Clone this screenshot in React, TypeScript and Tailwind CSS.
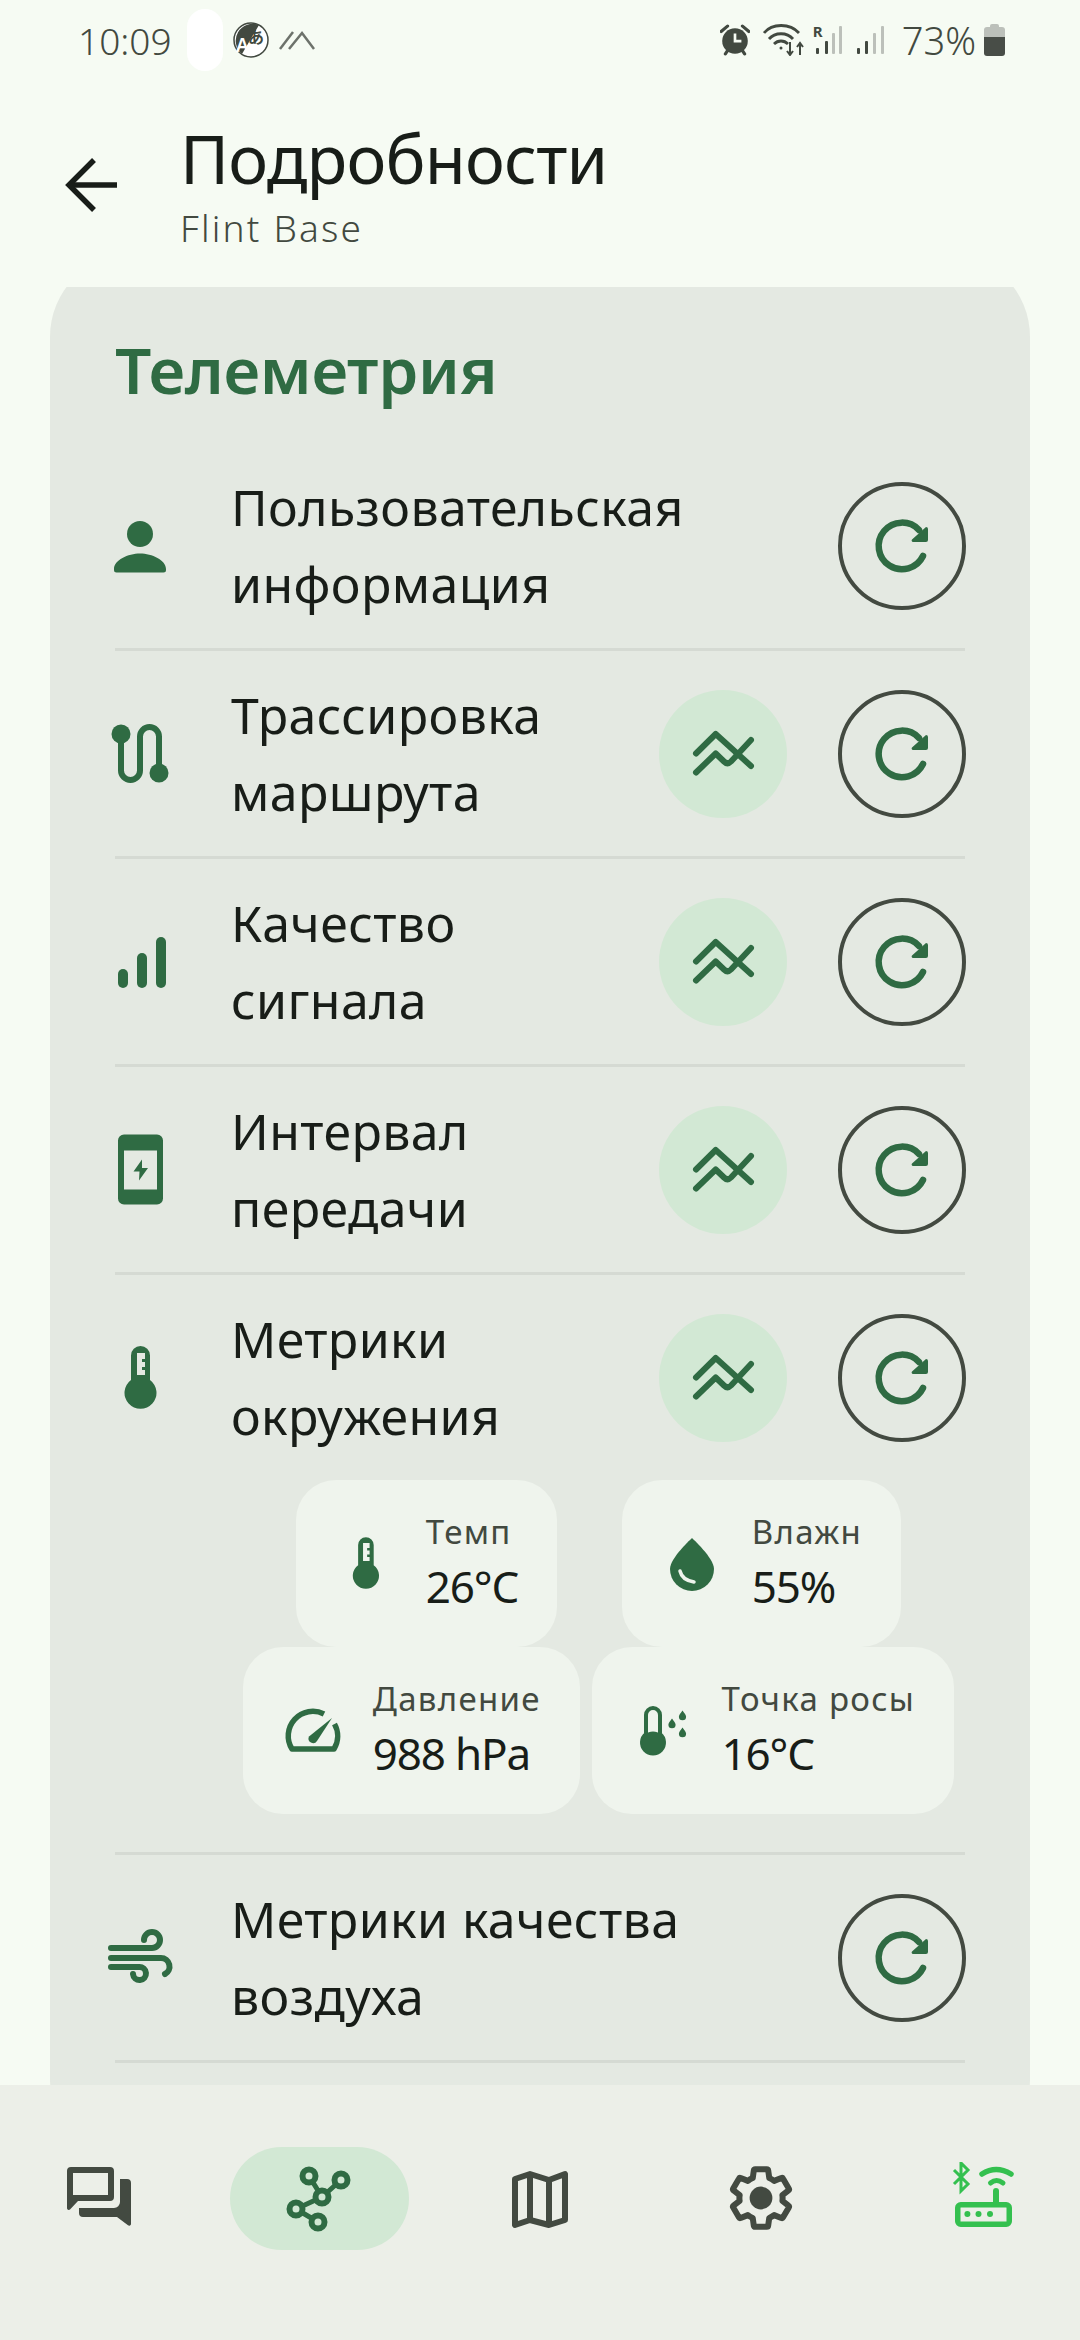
import type { ReactNode } from "react";

const font = { fontFamily: '"Noto Sans", sans-serif' };

function Person() {
  return (
    <svg viewBox="0 0 72 72" className="w-[72px] h-[72px] fill-[#2f6b43]">
      <circle cx="36" cy="24" r="13" />
      <path d="M10 59C10 50 24 43.5 36 43.5S62 50 62 59v1a2.5 2.5 0 0 1-2.5 2.5h-47A2.5 2.5 0 0 1 10 60z" />
    </svg>
  );
}

function Route() {
  return (
    <svg viewBox="0 0 72 72" className="w-[72px] h-[72px]">
      <path d="M17 16V52.5a9.5 9.5 0 0 0 19 0V18.5a9.5 9.5 0 0 1 19 0V55" fill="none" stroke="#2f6b43" strokeWidth="6" />
      <circle cx="17" cy="16" r="9.5" fill="#2f6b43" />
      <circle cx="55" cy="55" r="9.5" fill="#2f6b43" />
    </svg>
  );
}

function Signal() {
  return (
    <svg viewBox="0 0 72 72" className="w-[72px] h-[72px] fill-[#2f6b43]">
      <rect x="14" y="43" width="10" height="19" rx="5" />
      <rect x="33" y="27" width="10" height="35" rx="5" />
      <rect x="52" y="11" width="10" height="51" rx="5" />
    </svg>
  );
}

function Phone() {
  return (
    <svg viewBox="0 0 72 72" className="w-[72px] h-[72px]">
      <path
        fillRule="evenodd"
        fill="#2f6b43"
        d="M20 .5h33a6 6 0 0 1 6 6v58a6 6 0 0 1-6 6H20a6 6 0 0 1-6-6v-58a6 6 0 0 1 6-6zM20 16.5v39h33v-39z"
      />
      <path d="M38 25.5L29.5 37.5H35.5L35 46.5L44 34H38Z" fill="#2f6b43" />
    </svg>
  );
}

function Thermo({ small }: { small?: boolean }) {
  return (
    <svg viewBox="0 0 72 72" className={small ? "w-[59px] h-[59px]" : "w-[72px] h-[72px]"}>
      <path
        fillRule="evenodd"
        fill="#2f6b43"
        d="M27 13.5a9.5 9.5 0 0 1 19 0V38a16 16 0 1 1-19 0zM33 11V33H41V28H38V25H41V20H38V17H41V11z"
      />
    </svg>
  );
}

function Wind() {
  return (
    <svg viewBox="0 0 72 72" className="w-[72px] h-[72px]" fill="none" stroke="#2f6b43" strokeWidth="6" strokeLinecap="round">
      <path d="M7 26H48A8 8 0 1 0 40 18" />
      <path d="M7 36H57A8.5 8.5 0 0 1 61 52" />
      <path d="M7 45H35A6.5 6.5 0 1 1 29 52" />
    </svg>
  );
}

function Drop() {
  return (
    <svg viewBox="0 0 72 72" className="w-[72px] h-[72px]">
      <path d="M36 10C36 10 14 30 14 41A22 22 0 0 0 58 41C58 30 36 10 36 10Z" fill="#2f6b43" />
      <path d="M24 43Q26 52 38 54" fill="none" stroke="#eff4ed" strokeWidth="3.5" strokeLinecap="round" />
    </svg>
  );
}

function Gauge() {
  return (
    <svg viewBox="0 0 72 72" className="w-[72px] h-[72px]">
      <path
        d="M47 19A24.6 24.6 0 0 0 15 54H57A24.6 24.6 0 0 0 57.5 29"
        fill="none"
        stroke="#2f6b43"
        strokeWidth="5.5"
        strokeLinejoin="round"
      />
      <path d="M55 23L40 46a4.6 4.6 0 0 1-8-4.5Z" fill="#2f6b43" />
    </svg>
  );
}

function DewThermo() {
  return (
    <svg viewBox="0 0 72 72" className="w-[72px] h-[72px]">
      <path d="M20 39V20a7 7 0 0 1 14 0V39a11 11 0 1 1-14 0Z" fill="none" stroke="#2f6b43" strokeWidth="4" />
      <circle cx="27" cy="47.5" r="11" fill="#2f6b43" />
      <path d="M46 23.5c-2 3-3.6 4.5-3.6 6.2a3.6 3.6 0 0 0 7.2 0c0-1.7-1.6-3.2-3.6-6.2Z" fill="#2f6b43" />
      <path d="M56.5 15.5c-2 3-3.6 4.5-3.6 6.2a3.6 3.6 0 0 0 7.2 0c0-1.7-1.6-3.2-3.6-6.2Z" fill="#2f6b43" />
      <path d="M56.5 32.5c-2 3-3.6 4.5-3.6 6.2a3.6 3.6 0 0 0 7.2 0c0-1.7-1.6-3.2-3.6-6.2Z" fill="#2f6b43" />
    </svg>
  );
}

function TraceButton() {
  return (
    <div className="w-[128px] h-[128px] rounded-full bg-[#d2e8d4] flex items-center justify-center shrink-0">
      <svg viewBox="0 0 72 72" className="w-[72px] h-[72px]" fill="none" stroke="#2f6b43" strokeWidth="6" strokeLinecap="round" strokeLinejoin="round">
        <path d="M9 35.5L28.7 16L64 48" />
        <path d="M9 54.5L28.7 35.5L37 43.5Q40.5 47 44 43.5L64 22" />
      </svg>
    </div>
  );
}

function RefreshButton() {
  return (
    <div className="w-[128px] h-[128px] rounded-full border-4 border-[#434a41] flex items-center justify-center shrink-0">
      <svg viewBox="0 0 72 72" className="w-[72px] h-[72px]">
        <path d="M57 46A23.3 23.3 0 1 1 53 20" fill="none" stroke="#2f6b43" strokeWidth="6.5" strokeLinecap="round" />
        <path d="M60 17a2 2 0 0 1 2 2V30a2 2 0 0 1-2 2H47a1.5 1.5 0 0 1-1-2.5Z" fill="#2f6b43" />
      </svg>
    </div>
  );
}

function Row({ icon, text, trace }: { icon: ReactNode; text: string; trace?: boolean }) {
  return (
    <div className="h-[205px] flex items-center">
      <div className="w-[50px] mr-[66px] flex justify-center">
        <div className="w-[72px] h-[72px] shrink-0">{icon}</div>
      </div>
      <div className="flex-1 whitespace-pre-line text-[50px] leading-[77px] tracking-[0.4px] text-[#181d18]">{text}</div>
      {trace && (
        <div className="mr-[51px]">
          <TraceButton />
        </div>
      )}
      <RefreshButton />
    </div>
  );
}

function Divider() {
  return <div className="h-[3px] bg-[#d5dad3] mr-px" />;
}

function Metric({ icon, label, value }: { icon: ReactNode; label: string; value: string }) {
  return (
    <div className="h-[167px] rounded-[40px] bg-[#eff4ed] flex items-center pl-[34px] pr-[39px] gap-[24px]">
      <div className="w-[72px] h-[72px] flex items-center justify-center">{icon}</div>
      <div className="pb-[6px]">
        <div className="text-[33px] leading-[50px] tracking-[1.3px] text-[#424940]">{label}</div>
        <div className="text-[44px] leading-[58px] tracking-[-1.2px] text-[#181d18]">{value}</div>
      </div>
    </div>
  );
}

function StatusLeft() {
  return (
    <div className="flex items-center">
      <span className="ml-[78px] text-[37px] leading-none text-[#424940] font-light">10:09</span>
      <div className="ml-[15px] w-[36px] h-[62px] rounded-full bg-white" />
      <svg viewBox="0 0 36 36" className="ml-[10px] w-[36px] h-[36px]">
        <circle cx="18" cy="18" r="17" fill="#fff" stroke="#424940" strokeWidth="1.5" />
        <path d="M26 3A17 17 0 0 0 9 32Z" fill="#424940" />
        <text x="3" y="30" fontSize="19" fontWeight="600" fill="#fff" fontFamily="Noto Sans, sans-serif">A</text>
        <text x="15" y="21" fontSize="16" fontWeight="700" fill="#424940" fontFamily="Noto Sans CJK JP, sans-serif">あ</text>
      </svg>
      <svg viewBox="0 0 36 20" className="ml-[10px] w-[36px] h-[20px]" fill="none" stroke="#6d726b" strokeWidth="2.5">
        <path d="M1 19L14 2" />
        <path d="M10 19L23 3L35 19" />
      </svg>
    </div>
  );
}

function StatusRight() {
  return (
    <div className="flex items-center mr-[75px]">
      <svg viewBox="0 0 28 30" className="w-[30px] h-[32px]">
        <circle cx="14" cy="16" r="12" fill="#424940" />
        <path d="M14 9V16H20" fill="none" stroke="#f6fbf3" strokeWidth="2.5" />
        <path d="M1 7L7 2M27 7L21 2M5 28L7 25M23 28L21 25" stroke="#424940" strokeWidth="3" strokeLinecap="round" />
      </svg>
      <svg viewBox="0 0 42 32" className="ml-[13px] w-[42px] h-[32px]" fill="none" stroke="#424940" strokeWidth="2.8">
        <path d="M1 9C9 -1 27 -1 36 9" />
        <path d="M6 15C12 8 24 8 30 15" />
        <path d="M11 20C15 16 21 16 25 20" />
        <circle cx="18" cy="24" r="1.5" fill="#424940" stroke="none" />
        <path d="M27 18V31M24 27L27 31L30 27" strokeWidth="2" />
        <path d="M37 31V19M34 23L37 19L40 23" strokeWidth="2" />
      </svg>
      <div className="relative ml-[8px] w-[30px] h-[30px]">
        <span className="absolute left-0 -top-[2px] text-[15px] leading-[17px] font-bold text-[#424940]">R</span>
        <svg viewBox="0 0 30 30" className="w-[30px] h-[30px]">
          <rect x="3" y="23" width="3" height="6" rx="1" fill="#424940" />
          <rect x="12" y="16" width="3" height="13" rx="1" fill="#424940" />
          <rect x="19" y="8" width="3" height="21" rx="1" fill="#bcc0ba" />
          <rect x="26" y="1" width="3" height="28" rx="1" fill="#bcc0ba" />
        </svg>
      </div>
      <svg viewBox="0 0 28 30" className="ml-[13px] w-[28px] h-[30px]">
        <rect x="1" y="23" width="3" height="6" rx="1" fill="#424940" />
        <rect x="9" y="16" width="3" height="13" rx="1" fill="#424940" />
        <rect x="17" y="8" width="3" height="21" rx="1" fill="#bcc0ba" />
        <rect x="25" y="1" width="3" height="28" rx="1" fill="#bcc0ba" />
      </svg>
      <span className="ml-[18px] text-[38px] leading-none text-[#424940] font-light">73%</span>
      <div className="ml-[8px] w-[21px] h-[32px] flex flex-col items-center">
        <div className="w-[9px] h-[3px] rounded-t-[2px] bg-[#bcc0ba]" />
        <div className="w-[21px] h-[10px] rounded-t-[3px] bg-[#bcc0ba]" />
        <div className="w-[21px] h-[19px] rounded-b-[3px] bg-[#484d47]" />
      </div>
    </div>
  );
}

function Chat() {
  return (
    <svg viewBox="0 0 72 72" className="w-[72px] h-[72px]" fill="#434a41">
      <path
        fillRule="evenodd"
        d="M9 5H48a4 4 0 0 1 4 4V35a4 4 0 0 1-4 4H16L8 47.5a1.8 1.8 0 0 1-3-1.3V9a4 4 0 0 1 4-4zM11 11V33H46V11Z"
      />
      <path d="M58 17H65a4 4 0 0 1 4 4V62a1.8 1.8 0 0 1-3 1.3L55 55H21a4 4 0 0 1-4-4V46H52a6 6 0 0 0 6-6Z" />
    </svg>
  );
}

function Hub() {
  return (
    <svg viewBox="0 0 72 72" className="w-[72px] h-[72px]" fill="#d2e8d4" stroke="#2f6b43" strokeWidth="6">
      <path d="M26 13L39 34L58 17M39 34L13 46L35 59" fill="none" strokeWidth="5" />
      <circle cx="26" cy="13" r="6.5" />
      <circle cx="58" cy="17" r="6.5" />
      <circle cx="39" cy="34" r="6.5" />
      <circle cx="13" cy="46" r="6.5" />
      <circle cx="35" cy="59" r="6.5" />
    </svg>
  );
}

function MapIcon() {
  return (
    <svg viewBox="0 0 72 72" className="w-[72px] h-[72px]" fill="none" stroke="#434a41" strokeWidth="6" strokeLinejoin="round">
      <path d="M11 17L26 12L45 18L61 12V58L45 63L26 58L11 63Z" />
      <path d="M26 12V58M45 18V63" />
    </svg>
  );
}

function Gear() {
  return (
    <svg viewBox="0 0 24 24" className="w-[72px] h-[72px]">
      <path
        fill="none"
        stroke="#434a41"
        strokeWidth="2"
        strokeLinejoin="round"
        d="M19.14,12.94c0.04-0.3,0.06-0.61,0.06-0.94c0-0.32-0.02-0.64-0.07-0.94l2.03-1.58c0.18-0.14,0.23-0.41,0.12-0.61 l-1.92-3.32c-0.12-0.22-0.37-0.29-0.59-0.22l-2.39,0.96c-0.5-0.38-1.03-0.7-1.62-0.94L14.4,2.81c-0.04-0.24-0.24-0.41-0.48-0.41 h-3.84c-0.24,0-0.43,0.17-0.47,0.41L9.25,5.35C8.66,5.59,8.12,5.92,7.63,6.29L5.24,5.33c-0.22-0.08-0.47,0-0.59,0.22L2.74,8.87 C2.62,9.08,2.66,9.34,2.86,9.48l2.03,1.58C4.84,11.36,4.8,11.69,4.8,12s0.02,0.64,0.07,0.94l-2.03,1.58 c-0.18,0.14-0.23,0.41-0.12,0.61l1.92,3.32c0.12,0.22,0.37,0.29,0.59,0.22l2.39-0.96c0.5,0.38,1.03,0.7,1.62,0.94l0.36,2.54 c0.05,0.24,0.24,0.41,0.48,0.41h3.84c0.24,0,0.44-0.17,0.47-0.41l0.36-2.54c0.59-0.24,1.13-0.56,1.62-0.94l2.39,0.96 c0.22,0.08,0.47,0,0.59-0.22l1.92-3.32c0.12-0.22,0.07-0.47-0.12-0.61L19.14,12.94z"
      />
      <circle cx="12" cy="12" r="3.8" fill="#434a41" />
    </svg>
  );
}

function Router() {
  return (
    <svg viewBox="0 0 72 72" className="w-[72px] h-[72px]" fill="none" stroke="#34c04f">
      <rect x="11.75" y="42.75" width="51.5" height="19.5" rx="3" strokeWidth="5.5" />
      <circle cx="21.4" cy="52" r="3" fill="#34c04f" stroke="none" />
      <circle cx="32.5" cy="52" r="3" fill="#34c04f" stroke="none" />
      <circle cx="44" cy="52" r="3" fill="#34c04f" stroke="none" />
      <path d="M50 29V40" strokeWidth="6" strokeLinecap="round" />
      <path d="M36 12Q50 3 65 12" strokeWidth="5.5" strokeLinecap="round" />
      <path d="M44.5 21Q50.5 16 57 21" strokeWidth="5" strokeLinecap="round" />
      <path d="M8 8L22 22L15 29V1L22 8L8 22" strokeWidth="3" />
    </svg>
  );
}

export default function App() {
  return (
    <div style={font} className="w-[1080px] h-[2340px] overflow-hidden bg-[#f6fbf3] flex flex-col">
      <div className="h-[80px] flex items-center justify-between shrink-0">
        <StatusLeft />
        <StatusRight />
      </div>

      <div className="h-[207px] shrink-0 flex">
        <div className="w-[180px] pl-[56px] pt-[69px]">
          <svg viewBox="0 0 72 72" className="w-[72px] h-[72px]" fill="none" stroke="#181d18" strokeWidth="5.5">
            <path d="M61 36H14" />
            <path d="M38 11L13 36L38 61" />
          </svg>
        </div>
        <div className="pt-[33px]">
          <div className="text-[67px] leading-[90px] tracking-[-0.8px] text-[#181d18] font-normal">Подробности</div>
          <div className="text-[37px] leading-[50px] tracking-[2.2px] text-[#424940] font-light">Flint Base</div>
        </div>
      </div>

      <div className="flex-1 overflow-hidden px-[50px]">
        <div className="-mt-[34px] rounded-[84px] bg-[#e4e9e2] pl-[65px] pr-[64px] pb-[100px]">
          <div className="h-[190px] pt-[75px] text-[64px] leading-[84px] tracking-[-0.3px] font-semibold text-[#2f6b43]">Телеметрия</div>
          <Row icon={<Person />} text={"Пользовательская\nинформация"} />
          <Divider />
          <Row icon={<Route />} text={"Трассировка\nмаршрута"} trace />
          <Divider />
          <Row icon={<Signal />} text={"Качество\nсигнала"} trace />
          <Divider />
          <Row icon={<Phone />} text={"Интервал\nпередачи"} trace />
          <Divider />
          <Row icon={<Thermo />} text={"Метрики\nокружения"} trace />
          <div className="flex flex-wrap justify-evenly ml-[116px] mb-[38px]">
            <Metric icon={<Thermo small />} label="Темп" value="26°C" />
            <Metric icon={<Drop />} label="Влажн" value="55%" />
            <Metric icon={<Gauge />} label="Давление" value="988 hPa" />
            <Metric icon={<DewThermo />} label="Точка росы" value="16°C" />
          </div>
          <Divider />
          <Row icon={<Wind />} text={"Метрики качества\nвоздуха"} />
          <Divider />
        </div>
      </div>

      <div className="h-[255px] shrink-0 bg-[#ecefe8] flex justify-center items-start pt-[62px] overflow-hidden">
        <div className="w-[221px] shrink-0 flex justify-center pt-[15px]"><Chat /></div>
        <div className="w-[221px] shrink-0 flex justify-center">
          <div className="w-[179px] h-[103px] rounded-full bg-[#d2e8d4] flex items-center justify-center"><Hub /></div>
        </div>
        <div className="w-[221px] shrink-0 flex justify-center pt-[15px]"><MapIcon /></div>
        <div className="w-[221px] shrink-0 flex justify-center pt-[15px]"><Gear /></div>
        <div className="w-[221px] shrink-0 flex justify-center pt-[15px]"><Router /></div>
      </div>
    </div>
  );
}
